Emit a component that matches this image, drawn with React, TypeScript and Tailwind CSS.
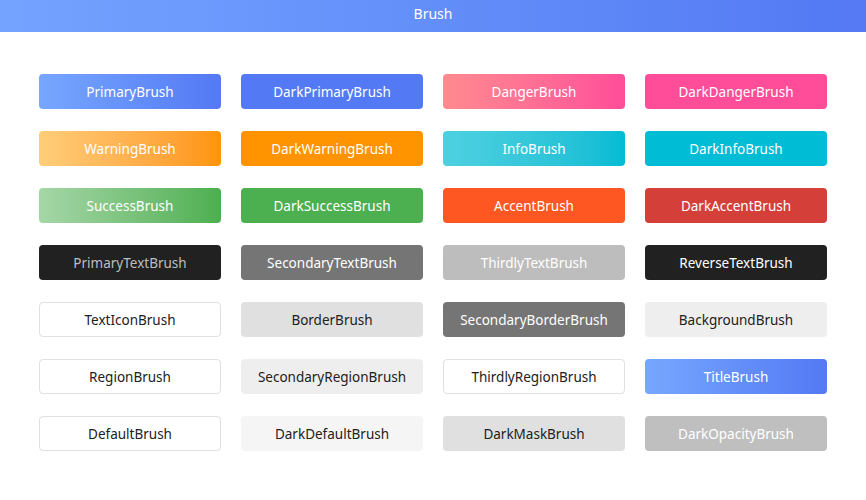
import React from "react";

type BrushItem = {
  name: string;
  className: string;
};

// 4 columns x 7 rows, same order as the brush resource file
const brushes: BrushItem[] = [
  { name: "PrimaryBrush", className: "bg-gradient-to-r from-[#77a6ff] to-[#5479f3] text-white" },
  { name: "DarkPrimaryBrush", className: "bg-[#5479f4] text-white" },
  { name: "DangerBrush", className: "bg-gradient-to-r from-[#ff8a8f] to-[#ff4d99] text-white" },
  { name: "DarkDangerBrush", className: "bg-[#ff4d99] text-white" },

  { name: "WarningBrush", className: "bg-gradient-to-r from-[#ffcd78] to-[#ff9400] text-white" },
  { name: "DarkWarningBrush", className: "bg-[#ff9400] text-white" },
  { name: "InfoBrush", className: "bg-gradient-to-r from-[#4dd1e0] to-[#00bcd4] text-white" },
  { name: "DarkInfoBrush", className: "bg-[#00bcd4] text-white" },

  { name: "SuccessBrush", className: "bg-gradient-to-r from-[#a5d6a7] to-[#4caf50] text-white" },
  { name: "DarkSuccessBrush", className: "bg-[#4caf50] text-white" },
  { name: "AccentBrush", className: "bg-[#ff5722] text-white" },
  { name: "DarkAccentBrush", className: "bg-[#d43f3a] text-white" },

  { name: "PrimaryTextBrush", className: "bg-[#212121] text-[#bdbdbd]" },
  { name: "SecondaryTextBrush", className: "bg-[#757575] text-white" },
  { name: "ThirdlyTextBrush", className: "bg-[#bdbdbd] text-white" },
  { name: "ReverseTextBrush", className: "bg-[#212121] text-white" },

  { name: "TextIconBrush", className: "bg-white border border-[#e0e0e0] text-[#212121]" },
  { name: "BorderBrush", className: "bg-[#e0e0e0] text-[#212121]" },
  { name: "SecondaryBorderBrush", className: "bg-[#757575] text-white" },
  { name: "BackgroundBrush", className: "bg-[#eeeeee] text-[#212121]" },

  { name: "RegionBrush", className: "bg-white border border-[#e0e0e0] text-[#212121]" },
  { name: "SecondaryRegionBrush", className: "bg-[#eeeeee] text-[#212121]" },
  { name: "ThirdlyRegionBrush", className: "bg-white border border-[#e0e0e0] text-[#212121]" },
  { name: "TitleBrush", className: "bg-gradient-to-r from-[#77a6ff] to-[#5479f3] text-white" },

  { name: "DefaultBrush", className: "bg-white border border-[#e0e0e0] text-[#212121]" },
  { name: "DarkDefaultBrush", className: "bg-[#f5f5f5] text-[#212121]" },
  { name: "DarkMaskBrush", className: "bg-[#e0e0e0] text-[#212121]" },
  { name: "DarkOpacityBrush", className: "bg-[#bfbfbf] text-white" },
];

export default function App() {
  return (
    <div
      className="w-[866px] h-[500px] bg-white flex flex-col"
      style={{ fontFamily: '"Noto Sans", "Open Sans", sans-serif' }}
    >
      <div className="h-[32px] pb-[5px] flex items-center justify-center bg-gradient-to-r from-[#73a3ff] to-[#5479f3] text-white text-[14px]">
        Brush
      </div>
      <div className="grid grid-cols-[repeat(4,182px)] gap-x-[20px] gap-y-[22px] px-[39px] pt-[42px]">
        {brushes.map((item) => (
          <div
            key={item.name}
            className={`h-[35px] pt-[2px] rounded-[4px] flex items-center justify-center text-[13.5px] ${item.className}`}
          >
            {item.name}
          </div>
        ))}
      </div>
    </div>
  );
}
